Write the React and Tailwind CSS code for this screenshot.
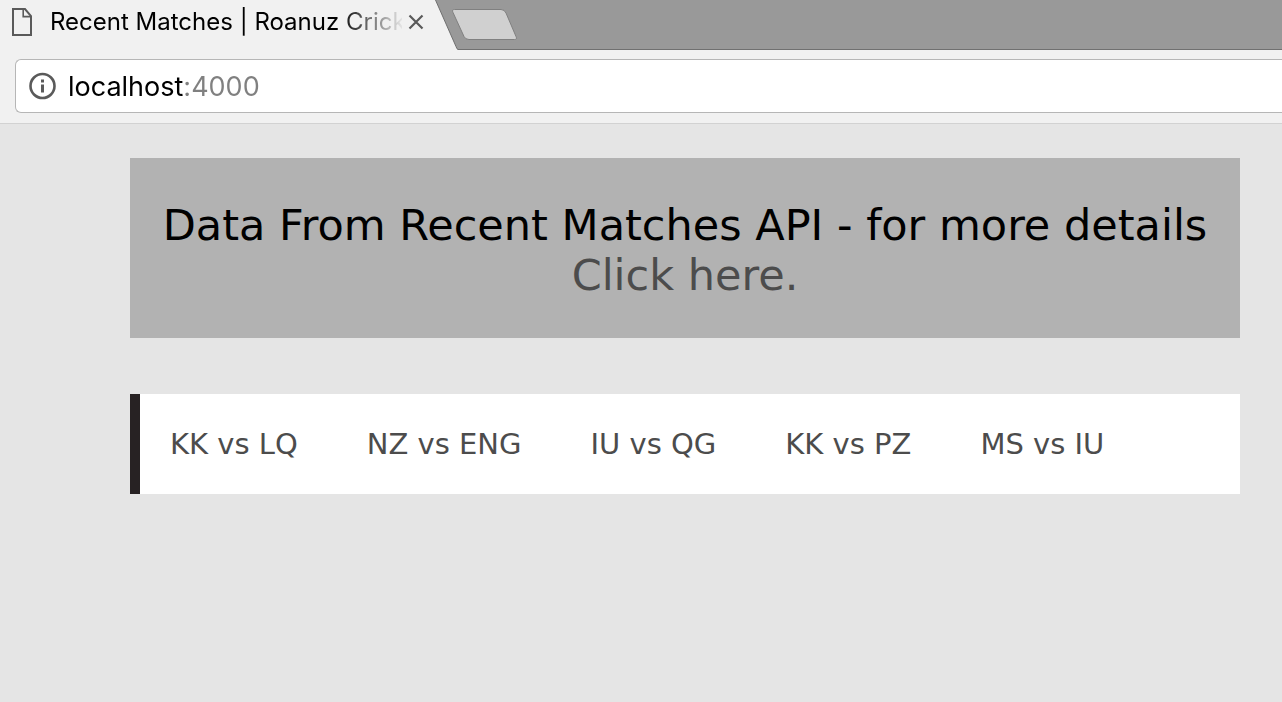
const matches = ["KK vs LQ", "NZ vs ENG", "IU vs QG", "KK vs PZ", "MS vs IU"];

function TabStrip() {
  return (
    <div className="flex h-[50px] bg-[#f1f1f1]">
      <div className="flex h-11 w-[434px] shrink-0 items-center pl-3">
        <svg className="h-7 w-5 shrink-0" viewBox="0 0 20 28" fill="none" stroke="#5a5a5a" strokeWidth="2">
          <path d="M1 1h12l6 7v19H1z" />
          <path d="M11.2 1v7.6H19" strokeWidth="1.6" />
        </svg>
        <div className="ml-[18px] w-[352px] whitespace-nowrap bg-linear-to-r from-black from-82% to-black/5 to-100% bg-clip-text text-2xl leading-8 text-transparent">
          Recent Matches | Roanuz Crick
        </div>
        <button type="button" aria-label="Close tab" className="ml-1.5 size-4 shrink-0">
          <svg viewBox="0 0 16 16" fill="none" stroke="#5a5a5a" strokeWidth="2.2">
            <path d="M1.5 1.5l13 13M14.5 1.5l-13 13" />
          </svg>
        </button>
      </div>
      <svg className="h-[50px] w-6 shrink-0" viewBox="0 0 24 50">
        <path d="M1.5 0L22 46.5Q23 49.5 24 49.5V0z" fill="#999" />
        <path d="M1.5 0L22 46.5Q23 49.5 24 49.5" fill="none" stroke="#6f6f6f" />
      </svg>
      <div className="flex-1 border-b border-[#707070] bg-[#999]">
        <button type="button" aria-label="New tab" className="-ml-2 mt-2 block h-8 w-[68px]">
          <svg viewBox="0 0 68 32">
            <path
              d="M4.500 1.500H51Q54.500 1.500 56 5L66 28.500Q67.500 31.500 64.500 31.500H19Q15.500 31.500 14 28.500L3 4.500Q1.500 1.500 4.500 1.500z"
              fill="#d0d0d0"
              stroke="#808080"
            />
          </svg>
        </button>
      </div>
    </div>
  );
}

function AddressBar() {
  return (
    <div className="border-b border-[#d2d2d2] bg-[#f1f1f1] pt-[9px] pb-2.5 pl-[15px]">
      <div className="flex h-[54px] items-center rounded-l-md border border-r-0 border-[#b6b6b6] bg-white pl-3">
        <svg className="size-7 shrink-0" viewBox="0 0 28 28" fill="none" stroke="#5a5a5a" strokeWidth="2.6">
          <circle cx="14.500" cy="14" r="12" />
          <path d="M14.500 12.500v8M14.500 7.500v3" strokeWidth="3" />
        </svg>
        <input
          type="text"
          aria-label="Address"
          defaultValue="localhost:4000"
          className="ml-3 w-full bg-linear-to-r from-black from-[117px] to-[#808080] to-[117px] bg-clip-text pt-0.5 text-[27px] leading-10 text-transparent caret-black outline-none"
        />
      </div>
    </div>
  );
}

export default function App() {
  return (
    <div className="min-h-screen bg-[#e5e5e5] font-['Inter',sans-serif]">
      <header>
        <TabStrip />
        <AddressBar />
      </header>
      <main className="mr-[42px] ml-[130px] pt-[34px] font-['DejaVu_Sans',Verdana,sans-serif]">
        <h1 className="bg-[#b2b2b2] px-5 pt-[42px] pb-[38px] text-center text-[43px] leading-[50px] text-black">
          Data From Recent Matches API - for more details{" "}
          <a href="#details" className="block text-[#4c4c4c]">
            Click here.
          </a>
        </h1>
        <nav
          aria-label="Recent matches"
          className="mt-14 flex h-[100px] items-center gap-[69px] border-l-10 border-[#272223] bg-white pt-0.5 pl-[30px] text-[29px] whitespace-nowrap text-[#4c4c4c]"
        >
          {matches.map((match) => (
            <a key={match} href="#match">
              {match}
            </a>
          ))}
        </nav>
      </main>
    </div>
  );
}
